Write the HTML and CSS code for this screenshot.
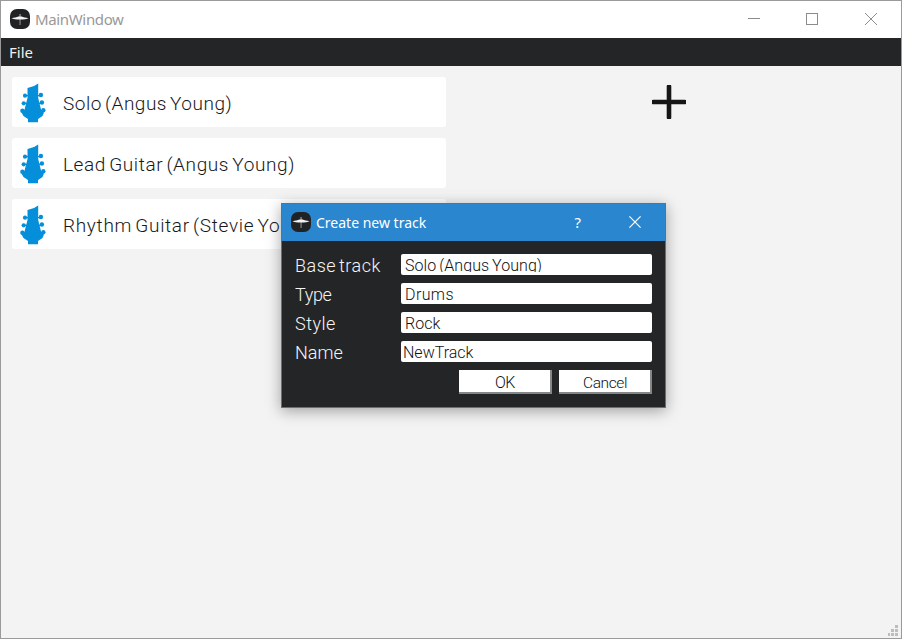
FILE: index.html
```html
<!DOCTYPE html>
<html lang="en">
<head>
<meta charset="utf-8">
<title>MainWindow</title>
<link rel="stylesheet" href="styles.css">
</head>
<body>
<svg class="defs" aria-hidden="true">
  <symbol id="app" viewBox="0 0 20 20">
    <rect width="20" height="20" rx="7" fill="#202224"/>
    <path d="M9.600 5h.9v3h-.9zM9.700 10h.7v6h-.7z" fill="#c8c8c8"/>
    <path d="M1.500 9.200C4 8.700 7 8.600 8.300 7.600h3.400C13 8.600 16 8.700 18.500 9.200 16 11 4 11 1.500 9.200Z" fill="#f2f2f2"/>
  </symbol>
  <symbol id="guitar" viewBox="0 0 26 40">
    <g fill="#058fda">
      <path d="M7.500 5Q14 4 18.200.500V15L21.500 28.500 24 29.500 22.500 33 18 36V39.300H8V36L3.500 33 1.500 29.500 4 28.500 7.500 15Z"/>
      <circle cx="5" cy="12.700" r="2.100"/><circle cx="3.700" cy="20.300" r="2.100"/><circle cx="2.400" cy="27.700" r="2.200"/>
      <circle cx="20.900" cy="12" r="2.200"/><circle cx="21.900" cy="19.500" r="2.200"/><circle cx="23.300" cy="27.200" r="2.200"/>
      <path d="M5 12h15v1.200H5zM4 19.700h17v1.200H4zM3 27h20v2H3z"/>
    </g>
  </symbol>
</svg>
<div class="window">
  <header class="titlebar">
    <svg class="app-icon"><use href="#app"/></svg>
    <span class="title">MainWindow</span>
    <svg class="controls" viewBox="0 0 130 16" fill="none" stroke="#8c8c8c">
      <path d="M0 7.500h12M117 2l12 12M129 2l-12 12"/><rect x="58.500" y="2.500" width="11" height="11"/>
    </svg>
  </header>
  <nav class="menubar"><span class="menu-item">File</span></nav>
  <main class="content">
    <section class="tracks">
      <div class="track"><svg class="guitar"><use href="#guitar"/></svg><span class="solo">Solo (Angus Young)</span></div>
      <div class="track"><svg class="guitar"><use href="#guitar"/></svg><span class="lead">Lead Guitar (Angus Young)</span></div>
      <div class="track"><svg class="guitar"><use href="#guitar"/></svg><span class="rhythm">Rhythm Guitar (Stevie Young)</span></div>
    </section>
    <section class="add">
      <svg class="plus" viewBox="0 0 34 34"><path d="M17 1.500v31M1.500 17h31" stroke="#161616" stroke-width="4.600" stroke-linecap="round"/></svg>
    </section>
  </main>
  <svg class="grip" viewBox="0 0 10 11" fill="#bdbdbd"><path d="M7 0h3v3H7zM3 4h3v3H3zM7 4h3v3H7zM0 8h2v3H0zM3 8h3v3H3zM7 8h3v3H7z"/></svg>
</div>
<div class="dialog">
  <header class="dialog-title">
    <svg class="app-icon"><use href="#app"/></svg>
    <span class="dialog-name">Create new track</span>
    <span class="help">?</span>
    <svg class="close" viewBox="0 0 12 12"><path d="M.4.400l11.200 11.200M11.600.400L.4 11.600" stroke="#fff" stroke-width="1.200"/></svg>
  </header>
  <div class="form">
    <label class="base-label">Base track</label><div class="field clipped"><span>Solo (Angus Young)</span></div>
    <label class="type-label">Type</label><div class="field"><span class="wide">Drums</span></div>
    <label class="style-label">Style</label><div class="field"><span>Rock</span></div>
    <label>Name</label><div class="field edit"><span>NewTrack</span></div>
  </div>
  <div class="buttons"><div class="button"><span class="ok">OK</span></div><div class="button"><span class="cancel">Cancel</span></div></div>
</div>
</body>
</html>
```
FILE: styles.css
```css
* { box-sizing: border-box; }
body { margin: 0; width: 902px; height: 639px; overflow: hidden; position: relative; font-family: Roboto, sans-serif; font-weight: 300; }
span, label { white-space: nowrap; }
svg { display: block; flex: none; }
.defs { position: absolute; width: 0; height: 0; }
.window { height: 639px; border: 1px solid #9a9a9a; background: #f3f3f3; position: relative; }
.titlebar { height: 37px; background: #fff; display: flex; align-items: center; padding: 0 23px 2px 9px; }
.app-icon { width: 20px; height: 20px; }
.title { font: 400 15px/20px "Noto Sans", sans-serif; letter-spacing: -.35px; color: #999; margin-left: 5px; }
.controls { width: 130px; height: 16px; margin-left: auto; }
.menubar { height: 28px; background: #242527; color: #f0f0f0; display: flex; align-items: center; padding-left: 8px; }
.menu-item { font: 400 15px/20px "Noto Sans", sans-serif; }
.content { display: flex; padding: 11px; }
.tracks { width: 434px; display: grid; gap: 11px; }
.track { height: 50px; background: #fff; border-radius: 3px; display: flex; align-items: center; padding: 2px 0 0 8px; font-size: 19px; color: #17181a; overflow: hidden; word-spacing: -2px; }
.track span { padding-top: 1px; }
.solo { letter-spacing: .5px; }
.lead { letter-spacing: .6px; }
.rhythm { letter-spacing: .68px; }
.guitar { width: 26px; height: 40px; margin: 0 17px 0 0; }
.add { flex: 1; display: flex; justify-content: center; padding: 8px 0 0 2px; }
.plus { width: 34px; height: 34px; }
.grip { position: absolute; width: 10px; height: 11px; right: 3px; bottom: 2px; }
.dialog { position: absolute; left: 281px; top: 203px; width: 385px; height: 205px; background: #242527; border: 1px solid #2a80c2; box-shadow: 0 3px 14px rgba(0,0,0,.35); }
.dialog-title { height: 37px; background: #2a86ce; color: #fff; display: flex; align-items: center; padding: 0 24px 2px 9px; }
.dialog-name { font: 400 14px/20px "Noto Sans", sans-serif; margin: 2px 0 0 5px; }
.help { font: 400 15px/20px "Noto Sans", sans-serif; margin-left: auto; margin-right: 48px; }
.close { width: 12px; height: 12px; }
.form { display: grid; grid-template-columns: 106px 251px; grid-auto-rows: 21px; row-gap: 8px; padding: 13px 0 0 13px; }
.form label { color: #f5f5f5; font-size: 18px; line-height: 24px; }
.form .base-label { letter-spacing: .5px; word-spacing: -2px; }
.form .type-label { letter-spacing: -.4px; }
.form .style-label { letter-spacing: .5px; }
.field { background: #fff; border-radius: 2px; padding-left: 4px; color: #111; font-size: 16px; }
.field span { display: block; line-height: 23px; }
.field.clipped span { height: 18px; overflow: hidden; letter-spacing: .05px; word-spacing: -1px; }
.field .wide { letter-spacing: .4px; }
.field.edit { padding-left: 2px; }
.buttons { display: flex; justify-content: flex-end; gap: 7px; padding: 8px 13px 0 0; }
.button { width: 93px; height: 24px; background: #fff; border: solid #858688; border-width: 0 2px 2px 0; color: #111; font-size: 16px; line-height: 25px; text-align: center; }
.ok { letter-spacing: -.5px; padding-left: 1px; }
.cancel { font-size: 15.5px; letter-spacing: -.4px; padding-left: 1px; }
```
